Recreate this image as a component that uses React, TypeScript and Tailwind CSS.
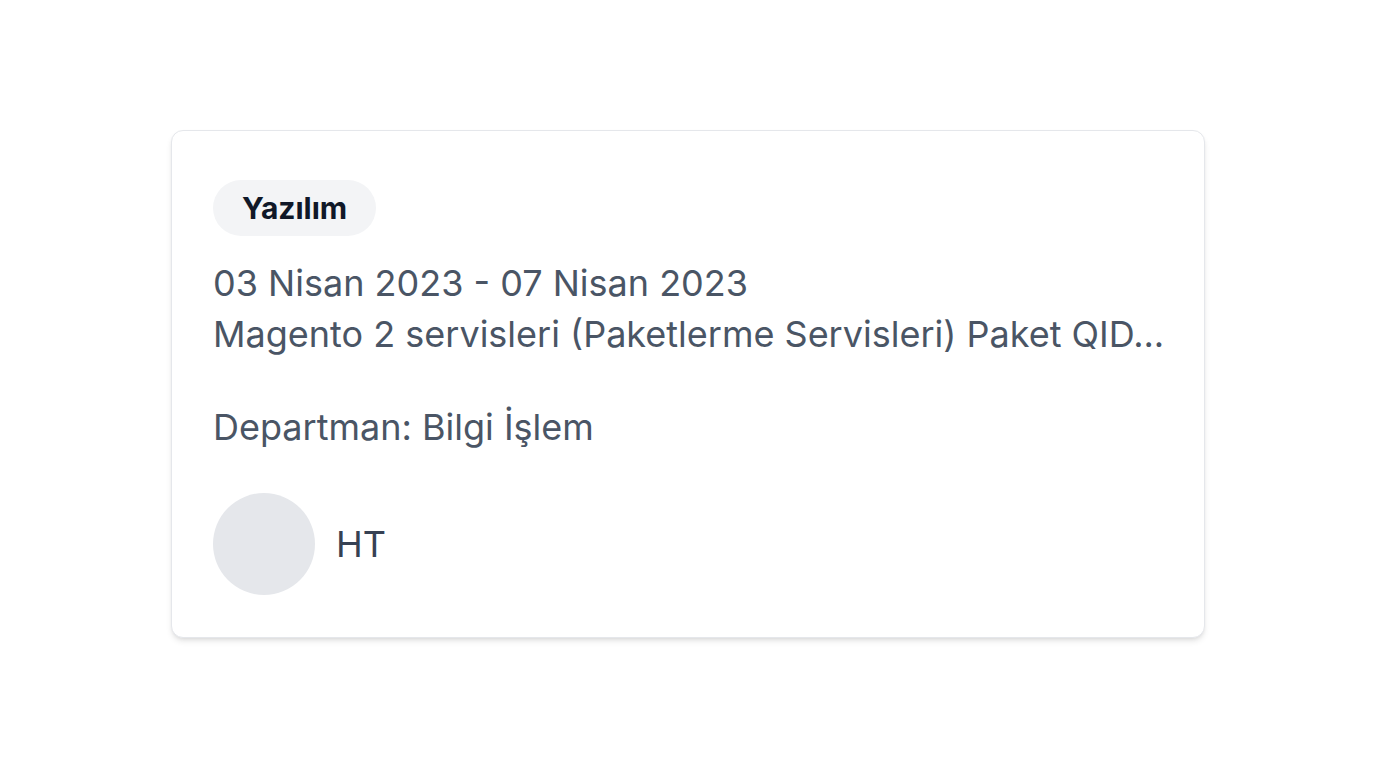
import React from 'react';

const task = {
  category: 'Yazılım',
  dates: '03 Nisan 2023 - 07 Nisan 2023',
  title: 'Magento 2 servisleri (Paketlerme Servisleri) Paket QID Sorgulama ve Etiket Basım Servislerinin Geliştirilmesi',
  department: 'Bilgi İşlem',
  initials: 'HT',
};

// short preview of the task title
const shorten = (text: string, max: number) =>
  text.length > max ? text.slice(0, max) + '...' : text;

export default function App() {
  return (
    <div
      className="flex min-h-screen items-center justify-center bg-white"
      style={{ fontFamily: 'Inter, "Noto Sans", sans-serif' }}
    >
      <div className="w-[1034px] rounded-xl border border-gray-200 bg-white px-[41px] pt-[49px] pb-[42px] shadow-md">
        <span className="inline-flex h-[56px] items-center rounded-full bg-gray-100 px-[29px] text-[30px] font-bold text-gray-900">
          {task.category}
        </span>

        <div className="mt-[22px] text-[36px] leading-[51px] text-gray-600">
          <p>{task.dates}</p>
          <p className="whitespace-nowrap">{shorten(task.title, 54)}</p>
        </div>

        <p className="mt-[42px] text-[36px] leading-[50px] text-gray-600">
          Departman: {task.department}
        </p>

        <div className="mt-[41px] flex items-center gap-[21px]">
          <div className="h-[102px] w-[102px] shrink-0 rounded-full bg-gray-200" />
          <span className="text-[36px] text-gray-700">{task.initials}</span>
        </div>
      </div>
    </div>
  );
}
